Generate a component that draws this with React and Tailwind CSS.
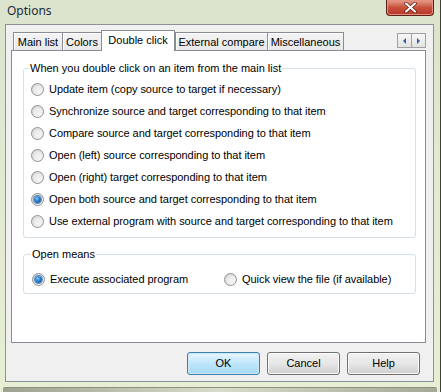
import React from "react"

const font = { fontFamily: '"Liberation Sans", Arial, sans-serif' }

const tabs = [
    { label: "Main list", w: "w-[50px]" },
    { label: "Colors", w: "w-[40px]" },
    { label: "Double click", w: "w-[74px]", active: true },
    { label: "External compare", w: "w-[93px]" },
    { label: "Miscellaneous", w: "w-[77px]" }
]

const choices = [
    "Update item (copy source to target if necessary)",
    "Synchronize source and target corresponding to that item",
    "Compare source and target corresponding to that item",
    "Open (left) source corresponding to that item",
    "Open (right) target corresponding to that item",
    "Open both source and target corresponding to that item",
    "Use external program with source and target corresponding to that item"
]

function Radio({ checked }) {
    return (
        <span className="relative flex size-[13px] shrink-0 items-center justify-center rounded-full border border-[#8e8f8f] bg-gradient-to-br from-[#d4d4d4] to-[#fbfbfb]">
            {checked ? (
                <span className="size-[7px] rounded-full bg-[radial-gradient(circle_at_40%_35%,#7fc3f3_0%,#2a7ccb_45%,#0d3f7a_100%)] shadow-[0_0_0_1px_#5c8fc4]" />
            ) : (
                <span className="size-[7px] rounded-full bg-gradient-to-br from-[#e6e6e6] to-[#f7f7f7]" />
            )}
        </span>
    )
}

function Option({ label, checked, className = "" }) {
    return (
        <div className={"flex h-[22px] items-center gap-[5px] " + className}>
            <Radio checked={checked} />
            <span className="text-[11px] leading-none tracking-[-0.05px] text-black">{label}</span>
        </div>
    )
}

function Button({ children, primary }) {
    return (
        <button
            className={
                "h-[23px] w-[73px] rounded-[3px] border text-[11px] text-black " +
                (primary
                    ? "border-[#3c7fb1] bg-gradient-to-b from-[#eaf6fd] via-[#bee6fd] to-[#a7d9f5] shadow-[inset_0_0_0_1px_#cbe8f8]"
                    : "border-[#707070] bg-gradient-to-b from-[#f2f2f2] via-[#e6e6e6] to-[#cfcfcf] shadow-[inset_0_0_0_1px_#fbfbfb]")
            }
        >
            {children}
        </button>
    )
}

export default function App() {
    return (
        <div style={font} className="relative flex h-[392px] w-[441px] flex-col overflow-hidden border-r border-[#3d4232] bg-gradient-to-b from-[#dbe3cd] via-[#e3ead2] to-[#e6eed3]">
            {/* title bar */}
            <div className="relative h-[24px] shrink-0">
                <span className="absolute left-[7px] top-[2px] text-[12px] text-[#1c2a3c]" style={{ fontFamily: '"Noto Sans", "Open Sans", sans-serif' }}>
                    Options
                </span>
                <div className="absolute right-[6px] top-0 flex h-[16px] w-[48px] items-center justify-center rounded-b-[4px] border border-t-0 border-[#5a2119] bg-gradient-to-b from-[#e3a08f] via-[#c9503c] to-[#b5372a] shadow-[inset_0_0_0_1px_#e98f7d]">
                    <svg width="13" height="11" viewBox="0 0 13 11">
                        <path d="M2 1.5 L11 9.5 M11 1.5 L2 9.5" stroke="#5b2219" strokeWidth="3.4" strokeLinecap="round" />
                        <path d="M2 1.5 L11 9.5 M11 1.5 L2 9.5" stroke="#ffffff" strokeWidth="2" strokeLinecap="round" />
                    </svg>
                </div>
            </div>

            {/* client area */}
            <div className="ml-[5px] mr-[6px] flex h-[358px] shrink-0 flex-col border border-[#8d9298] bg-[#f0f0f0]">
                <div className="ml-[5px] mt-[5px] w-[415px]">
                    {/* tab strip */}
                    <div className="relative flex h-[20px] items-end pl-[2px]">
                        {tabs.map((t) =>
                            t.active ? (
                                <div key={t.label} className={"relative z-10 -mb-px flex h-[21px] items-center justify-center border border-b-0 border-[#898c95] bg-white pb-[2px] text-[11px] " + t.w}>
                                    {t.label}
                                </div>
                            ) : (
                                <div key={t.label} className={"-mr-px flex h-[18px] items-center justify-center border border-b-0 border-[#898c95] bg-gradient-to-b from-[#f4f4f4] to-[#e8e8e8] pt-px text-[11px] shadow-[inset_1px_1px_0_#ffffff] " + t.w}>
                                    {t.label}
                                </div>
                            )
                        )}
                        <div className="absolute right-0 top-[3px] flex">
                            <div className="flex h-[15px] w-[15px] items-center justify-center border border-[#a0a0a0] bg-gradient-to-b from-[#f6f6f6] to-[#e3e3e3]">
                                <svg width="4" height="6" viewBox="0 0 4 6"><path d="M3 0 L0 3 L3 6 Z" fill="#2d5fa8" /></svg>
                            </div>
                            <div className="-ml-px flex h-[15px] w-[15px] items-center justify-center border border-[#a0a0a0] bg-gradient-to-b from-[#f6f6f6] to-[#e3e3e3]">
                                <svg width="4" height="6" viewBox="0 0 4 6"><path d="M0 0 L3 3 L0 6 Z" fill="#2d5fa8" /></svg>
                            </div>
                        </div>
                    </div>

                    {/* tab page */}
                    <div className="flex h-[293px] flex-col border border-[#898c95] bg-white pl-[11px] pr-[9px]">
                        <div className="relative mt-[17px] h-[170px] rounded-[3px] border border-[#d5dfe5] pl-[7px] pt-[9px]">
                            <span className="absolute -top-[7px] left-[5px] bg-white px-[1px] text-[11px] leading-[13px]">
                                When you double click on an item from the main list
                            </span>
                            {choices.map((c, i) => (
                                <Option key={c} label={c} checked={i === 5} />
                            ))}
                        </div>
                        <div className="relative mt-[16px] flex h-[40px] items-center rounded-[3px] border border-[#d5dfe5] pl-[8px] pt-[10px]">
                            <span className="absolute -top-[7px] left-[7px] bg-white px-[1px] text-[11px] leading-[13px]">
                                Open means
                            </span>
                            <Option label="Execute associated program" checked className="w-[192px]" />
                            <Option label="Quick view the file (if available)" />
                        </div>
                    </div>
                </div>

                {/* buttons */}
                <div className="mt-[9px] flex justify-end gap-[7px] pr-[13px]">
                    <Button primary>OK</Button>
                    <Button>Cancel</Button>
                    <Button>Help</Button>
                </div>
            </div>
            <div className="mx-[3px] mt-[5px] h-[6px] rounded-t-[2px] border-t border-[#8d9080] bg-gradient-to-r from-[#9da190] via-[#d8dccb] to-[#a4a896]" />
        </div>
    )
}
